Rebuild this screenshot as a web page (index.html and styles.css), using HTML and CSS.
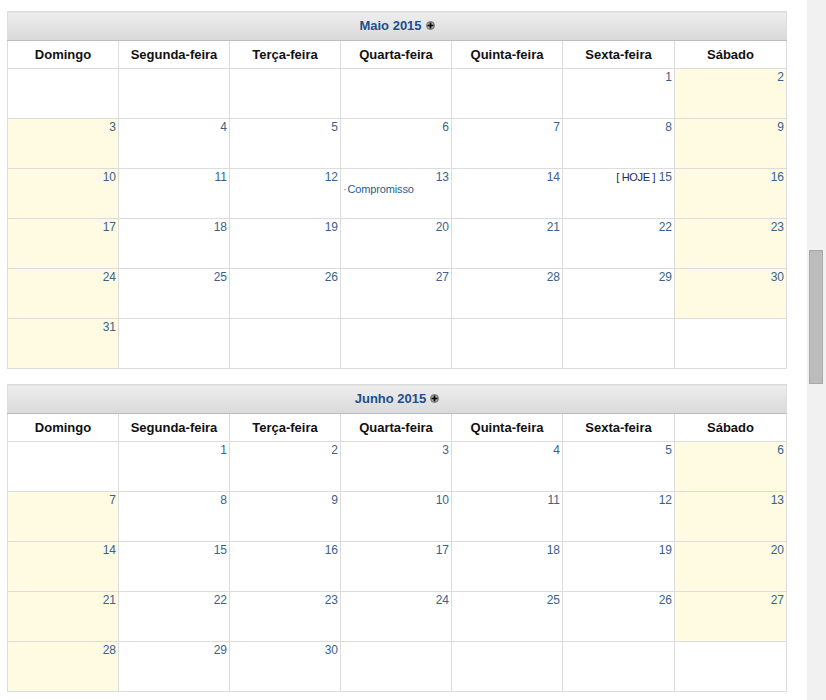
FILE: index.html
```html
<!DOCTYPE html>
<html lang="pt">
<head>
<meta charset="utf-8">
<title>Calendário</title>
<link rel="stylesheet" href="styles.css">
</head>
<body>
<div class="page">
<main class="content">
<table class="cal">
<colgroup><col class="c111"><col class="c111"><col class="c111"><col class="c111"><col class="c111"><col class="c112"><col class="c112"></colgroup>
<thead>
<tr><th colspan="7" class="month"><a class="month-name">Maio 2015</a><svg class="plus" viewBox="0 0 9 9"><circle cx="4.5" cy="4.5" r="4"/><path d="M4.5 1.5v6M1.5 4.5h6"/></svg></th></tr>
<tr class="days"><th>Domingo</th><th>Segunda-feira</th><th>Terça-feira</th><th>Quarta-feira</th><th>Quinta-feira</th><th>Sexta-feira</th><th>Sábado</th></tr>
</thead>
<tbody>
<tr><td></td><td></td><td></td><td></td><td></td><td><span class="n">1</span></td><td class="we"><span class="n">2</span></td></tr>
<tr><td class="we"><span class="n">3</span></td><td><span class="n">4</span></td><td><span class="n">5</span></td><td><span class="n">6</span></td><td><span class="n">7</span></td><td><span class="n">8</span></td><td class="we"><span class="n">9</span></td></tr>
<tr><td class="we"><span class="n">10</span></td><td><span class="n">11</span></td><td><span class="n">12</span></td><td><span class="n">13</span><div class="event"><span class="dot">·</span>Compromisso</div></td><td><span class="n">14</span></td><td><span class="n"><span class="today">[ HOJE ]</span> 15</span></td><td class="we"><span class="n">16</span></td></tr>
<tr><td class="we"><span class="n">17</span></td><td><span class="n">18</span></td><td><span class="n">19</span></td><td><span class="n">20</span></td><td><span class="n">21</span></td><td><span class="n">22</span></td><td class="we"><span class="n">23</span></td></tr>
<tr><td class="we"><span class="n">24</span></td><td><span class="n">25</span></td><td><span class="n">26</span></td><td><span class="n">27</span></td><td><span class="n">28</span></td><td><span class="n">29</span></td><td class="we"><span class="n">30</span></td></tr>
<tr><td class="we"><span class="n">31</span></td><td></td><td></td><td></td><td></td><td></td><td></td></tr>
</tbody>
</table>
<table class="cal">
<colgroup><col class="c111"><col class="c111"><col class="c111"><col class="c111"><col class="c111"><col class="c112"><col class="c112"></colgroup>
<thead>
<tr><th colspan="7" class="month"><a class="month-name">Junho 2015</a><svg class="plus" viewBox="0 0 9 9"><circle cx="4.5" cy="4.5" r="4"/><path d="M4.5 1.5v6M1.5 4.5h6"/></svg></th></tr>
<tr class="days"><th>Domingo</th><th>Segunda-feira</th><th>Terça-feira</th><th>Quarta-feira</th><th>Quinta-feira</th><th>Sexta-feira</th><th>Sábado</th></tr>
</thead>
<tbody>
<tr><td></td><td><span class="n">1</span></td><td><span class="n">2</span></td><td><span class="n">3</span></td><td><span class="n">4</span></td><td><span class="n">5</span></td><td class="we"><span class="n">6</span></td></tr>
<tr><td class="we"><span class="n">7</span></td><td><span class="n">8</span></td><td><span class="n">9</span></td><td><span class="n">10</span></td><td><span class="n">11</span></td><td><span class="n">12</span></td><td class="we"><span class="n">13</span></td></tr>
<tr><td class="we"><span class="n">14</span></td><td><span class="n">15</span></td><td><span class="n">16</span></td><td><span class="n">17</span></td><td><span class="n">18</span></td><td><span class="n">19</span></td><td class="we"><span class="n">20</span></td></tr>
<tr><td class="we"><span class="n">21</span></td><td><span class="n">22</span></td><td><span class="n">23</span></td><td><span class="n">24</span></td><td><span class="n">25</span></td><td><span class="n">26</span></td><td class="we"><span class="n">27</span></td></tr>
<tr><td class="we"><span class="n">28</span></td><td><span class="n">29</span></td><td><span class="n">30</span></td><td></td><td></td><td></td><td></td></tr>
</tbody>
</table>
</main>
<div class="scrollbar"><div class="thumb"></div></div>
</div>
</body>
</html>
```
FILE: styles.css
```css
* { box-sizing: border-box; }
html, body { margin: 0; padding: 0; background: #fff; }
body { font-family: "Liberation Sans", Arial, sans-serif; font-size: 12px; color: #333; }
.page { display: flex; width: 826px; height: 700px; overflow: hidden; }
.content { flex: 0 0 807px; padding: 11px 20px 0 7px; }
.cal { width: 780px; table-layout: fixed; border-collapse: collapse; margin-bottom: 15px; background: #fff; }
.c111 { width: 111px; }
.c112 { width: 112px; }
.cal th, .cal td { border: 1px solid #dcdcdc; padding: 0; }
.month { height: 29px; background: linear-gradient(#eeeeee, #d9d9d9); border-bottom: 1px solid #bdbdbd !important; text-align: center; padding-bottom: 2px !important; }
.month-name { font-size: 13px; font-weight: bold; color: #1f4e8c; }
.plus { width: 9px; height: 9px; margin-left: 4px; vertical-align: 0; }
.plus circle { fill: #a8a8a8; stroke: #555; stroke-width: .7; }
.plus path { stroke: #000; stroke-width: 1.6; fill: none; }
.days th { height: 28px; font-size: 13px; font-weight: bold; color: #111; text-align: center; background: #fff; padding-bottom: 1px; }
.cal td { height: 50px; vertical-align: top; text-align: right; padding: 1px 2px 0 2px; line-height: 14px; background: #fff; }
.cal td.we { background: #fffbe3; }
.n { color: #3a5f8c; font-size: 12px; }
.today { color: #1d2a5c; font-size: 11px; letter-spacing: -0.3px; }
.event { text-align: left; color: #1f5c99; font-size: 11px; line-height: 13px; margin-top: -1px; letter-spacing: -0.15px; }
.dot { color: #888; margin-right: 1px; }
.scrollbar { flex: 0 0 19px; background: #f1f1f1; height: 700px; padding: 250px 3px 0 2px; }
.thumb { height: 134px; background: #bcbcbc; border: 1px solid #a8a8a8; }
```
